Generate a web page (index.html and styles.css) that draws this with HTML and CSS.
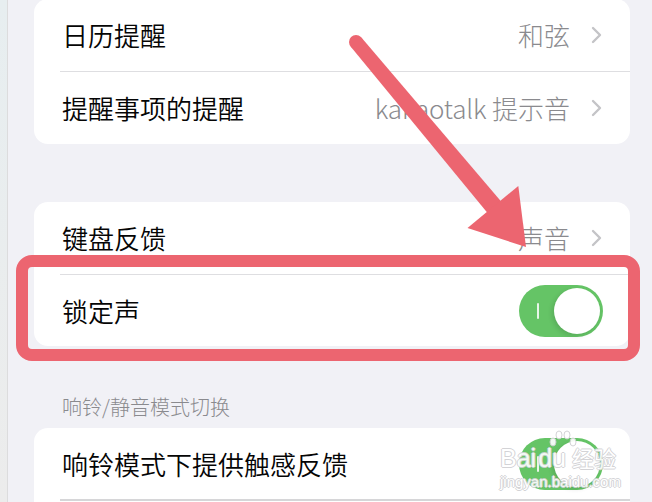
FILE: index.html
```html
<!DOCTYPE html>
<html lang="zh-CN">
<head>
<meta charset="utf-8">
<title>声音与触感</title>
<link rel="stylesheet" href="styles.css">
</head>
<body>
<div class="screen">
  <div class="strip"></div>
  <div class="content">
    <div class="card card-first">
      <div class="row">
        <span class="label">日历提醒</span>
        <span class="value">和弦</span>
        <svg class="chev" width="11" height="18" viewBox="0 0 11 18"><path d="M2 2 L9 9 L2 16" fill="none" stroke="#c4c4c7" stroke-width="2.4" stroke-linecap="round" stroke-linejoin="round"/></svg>
      </div>
      <div class="sep"></div>
      <div class="row">
        <span class="label">提醒事项的提醒</span>
        <span class="value"><span class="latin">kakaotalk</span> 提示音</span>
        <svg class="chev" width="11" height="18" viewBox="0 0 11 18"><path d="M2 2 L9 9 L2 16" fill="none" stroke="#c4c4c7" stroke-width="2.4" stroke-linecap="round" stroke-linejoin="round"/></svg>
      </div>
    </div>

    <div class="card card-second">
      <div class="row">
        <span class="label">键盘反馈</span>
        <span class="value">声音</span>
        <svg class="chev" width="11" height="18" viewBox="0 0 11 18"><path d="M2 2 L9 9 L2 16" fill="none" stroke="#c4c4c7" stroke-width="2.4" stroke-linecap="round" stroke-linejoin="round"/></svg>
      </div>
      <div class="sep"></div>
      <div class="row row-short">
        <span class="label">锁定声</span>
        <span class="toggle"><span class="on-mark"></span><span class="knob"></span></span>
      </div>
    </div>

    <div class="section-header">响铃/静音模式切换</div>

    <div class="card card-third">
      <div class="row row-short">
        <span class="label">响铃模式下提供触感反馈</span>
        <span class="toggle"><span class="on-mark"></span><span class="knob"></span></span>
      </div>
      <div class="sep sep-dark"></div>
      <div class="row"></div>
    </div>
  </div>

  <div class="highlight"></div>

  <svg class="arrow" width="652" height="502" viewBox="0 0 652 502">
    <circle cx="356" cy="42" r="7" fill="#ec6570"/>
    <polygon points="361.4,37.5 506.9,208.3 493.1,219.7 350.6,46.5" fill="#ec6570"/>
    <polygon points="526,247 467.5,228 518.3,186" fill="#ec6570"/>
  </svg>

  <div class="watermark">
    <svg class="paw" width="30" height="20" viewBox="0 0 30 20">
      <g fill="#fff" stroke="#d0d0d3" stroke-width="1">
        <ellipse cx="5" cy="12" rx="3" ry="4"/>
        <ellipse cx="11" cy="5" rx="3" ry="4"/>
        <ellipse cx="19" cy="5" rx="3" ry="4"/>
        <ellipse cx="25" cy="12" rx="3" ry="4"/>
      </g>
    </svg>
    <div class="wm-logo">Bai<span class="wm-du">du</span><span class="wm-cn">经验</span></div>
    <div class="wm-url">jingyan.baidu.com</div>
  </div>
</div>
</body>
</html>
```

FILE: styles.css
```css
* { box-sizing: border-box; }

html, body {
  margin: 0;
  padding: 0;
}

body {
  width: 652px;
  height: 502px;
  overflow: hidden;
  background: #f1f1f6;
  font-family: "Noto Sans CJK SC", "Noto Sans", sans-serif;
  color: #000;
}

.screen {
  position: relative;
  width: 652px;
  height: 502px;
  display: flex;
  overflow: hidden;
}

.strip {
  width: 8px;
  flex: none;
  background: linear-gradient(#e7eef0, #ececec);
  border-right: 1px solid #dcdcdd;
}

.content {
  flex: 1;
  padding: 0 22px 0 26px;
}

.card {
  background: #fff;
  border-radius: 14px;
  overflow: hidden;
}

.card-first {
  margin-top: -1px;
}

.card-second {
  margin-top: 58px;
}

.row {
  height: 72px;
  display: flex;
  align-items: center;
  padding: 0 28px 0 28px;
}

.row-short {
  height: 71px;
  padding-right: 27px;
}

.label {
  font-size: 26px;
  font-weight: 350;
  line-height: 1;
  flex: 1;
  white-space: nowrap;
  color: #050505;
}

.value {
  font-size: 26px;
  font-weight: 300;
  line-height: 1;
  color: #8a8a8e;
  margin-right: 21px;
  white-space: nowrap;
}

.latin {
  letter-spacing: -0.2px;
}

.chev {
  flex: none;
  display: block;
}

.sep {
  height: 1px;
  margin-left: 26px;
  background: #dedee1;
}

.sep-dark {
  height: 2px;
  background: #d6d6d8;
}

.section-header {
  margin: 47px 0 7px 28px;
  font-size: 20px;
  font-weight: 300;
  line-height: 28px;
  color: #8a8a8e;
}

.toggle {
  position: relative;
  flex: none;
  width: 84px;
  height: 52px;
  border-radius: 26px;
  background: #65c466;
}

.on-mark {
  position: absolute;
  left: 18px;
  top: 18px;
  width: 2px;
  height: 16px;
  background: rgba(255, 255, 255, 0.85);
  border-radius: 1px;
}

.knob {
  position: absolute;
  right: 3px;
  top: 3px;
  width: 46px;
  height: 46px;
  border-radius: 50%;
  background: #fff;
  box-shadow: -2px 2px 5px rgba(0, 0, 0, 0.12);
}

.highlight {
  position: absolute;
  left: 16px;
  top: 255px;
  width: 624px;
  height: 106px;
  border: 12px solid #ec6570;
  border-radius: 16px;
}

.arrow {
  position: absolute;
  left: 0;
  top: 0;
  pointer-events: none;
}

.watermark {
  position: absolute;
  left: 500px;
  top: 430px;
  width: 124px;
  color: #fff;
  opacity: 0.92;
}

.paw {
  position: absolute;
  left: 48px;
  top: 0;
}

.wm-logo {
  margin-top: 14px;
  font-family: "Liberation Sans", "Noto Sans CJK SC", sans-serif;
  font-size: 25px;
  line-height: 26px;
  text-shadow: 1px 0 0 #d0d0d3, -1px 0 0 #d0d0d3, 0 1px 0 #d0d0d3, 0 -1px 0 #d0d0d3;
  white-space: nowrap;
}

.wm-du {
  margin-left: 2px;
}

.wm-cn {
  margin-left: 6px;
  font-family: "Noto Sans CJK SC", sans-serif;
  font-size: 22px;
}

.wm-url {
  margin-top: 3px;
  font-family: "Liberation Sans", sans-serif;
  font-size: 15px;
  line-height: 16px;
  text-shadow: 1px 0 0 #d0d0d3, -1px 0 0 #d0d0d3, 0 1px 0 #d0d0d3, 0 -1px 0 #d0d0d3;
  white-space: nowrap;
}
```
